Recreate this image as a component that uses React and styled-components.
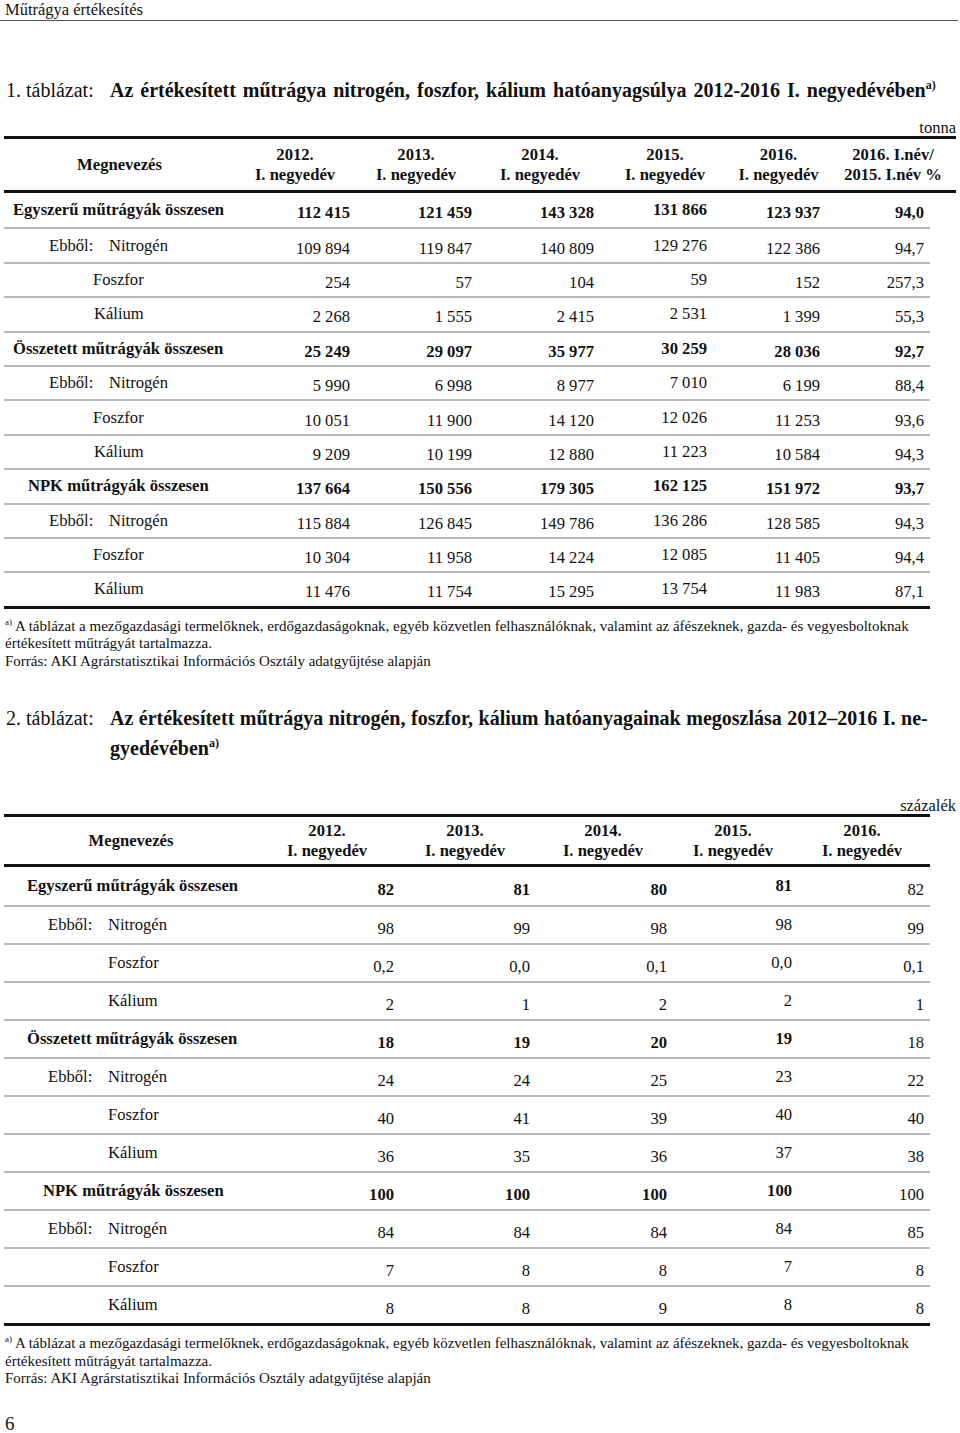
import styled, { createGlobalStyle } from "styled-components";

const GlobalStyle = createGlobalStyle`
  body {
    margin: 0;
    background: #fff;
    color: #111;
    font-family: "Liberation Serif", "Times New Roman", serif;
  }
`;

const table1 = {
  cols: "231px 120px 122px 126px 124px 103px 1fr",
  pads: [5, 5, 9, 20, 10, 6],
  heads: ["2012.|I. negyedév", "2013.|I. negyedév", "2014.|I. negyedév", "2015.|I. negyedév", "2016.|I. negyedév", "2016. I.név/|2015. I.név %"],
  bold: [true, true, true, true, true, true],
  raise: 3,
  rows: [
    { kind: "total", label: "Egyszerű műtrágyák összesen", indent: 9, values: ["112 415", "121 459", "143 328", "131 866", "123 937", "94,0"] },
    { kind: "lead", label: "Nitrogén", indent: 45, values: ["109 894", "119 847", "140 809", "129 276", "122 386", "94,7"] },
    { kind: "sub", label: "Foszfor", indent: 89, values: ["254", "57", "104", "59", "152", "257,3"] },
    { kind: "sub", label: "Kálium", indent: 90, values: ["2 268", "1 555", "2 415", "2 531", "1 399", "55,3"] },
    { kind: "total", label: "Összetett műtrágyák összesen", indent: 9, values: ["25 249", "29 097", "35 977", "30 259", "28 036", "92,7"] },
    { kind: "lead", label: "Nitrogén", indent: 45, values: ["5 990", "6 998", "8 977", "7 010", "6 199", "88,4"] },
    { kind: "sub", label: "Foszfor", indent: 89, values: ["10 051", "11 900", "14 120", "12 026", "11 253", "93,6"] },
    { kind: "sub", label: "Kálium", indent: 90, values: ["9 209", "10 199", "12 880", "11 223", "10 584", "94,3"] },
    { kind: "total", label: "NPK műtrágyák összesen", indent: 24, values: ["137 664", "150 556", "179 305", "162 125", "151 972", "93,7"] },
    { kind: "lead", label: "Nitrogén", indent: 45, values: ["115 884", "126 845", "149 786", "136 286", "128 585", "94,3"] },
    { kind: "sub", label: "Foszfor", indent: 89, values: ["10 304", "11 958", "14 224", "12 085", "11 405", "94,4"] },
    { kind: "sub", label: "Kálium", indent: 90, values: ["11 476", "11 754", "15 295", "13 754", "11 983", "87,1"] },
  ],
};

const table2 = {
  cols: "254px 138px 138px 138px 122px 1fr",
  pads: [2, 4, 5, 2, 6],
  heads: ["2012.|I. negyedév", "2013.|I. negyedév", "2014.|I. negyedév", "2015.|I. negyedév", "2016.|I. negyedév"],
  bold: [true, true, true, true, false],
  raise: 4,
  rows: [
    { kind: "total", label: "Egyszerű műtrágyák összesen", indent: 23, values: ["82", "81", "80", "81", "82"] },
    { kind: "lead", label: "Nitrogén", indent: 44, values: ["98", "99", "98", "98", "99"] },
    { kind: "sub", label: "Foszfor", indent: 104, values: ["0,2", "0,0", "0,1", "0,0", "0,1"] },
    { kind: "sub", label: "Kálium", indent: 104, values: ["2", "1", "2", "2", "1"] },
    { kind: "total", label: "Összetett műtrágyák összesen", indent: 23, values: ["18", "19", "20", "19", "18"] },
    { kind: "lead", label: "Nitrogén", indent: 44, values: ["24", "24", "25", "23", "22"] },
    { kind: "sub", label: "Foszfor", indent: 104, values: ["40", "41", "39", "40", "40"] },
    { kind: "sub", label: "Kálium", indent: 104, values: ["36", "35", "36", "37", "38"] },
    { kind: "total", label: "NPK műtrágyák összesen", indent: 39, values: ["100", "100", "100", "100", "100"] },
    { kind: "lead", label: "Nitrogén", indent: 44, values: ["84", "84", "84", "84", "85"] },
    { kind: "sub", label: "Foszfor", indent: 104, values: ["7", "8", "8", "7", "8"] },
    { kind: "sub", label: "Kálium", indent: 104, values: ["8", "8", "9", "8", "8"] },
  ],
};

function DataTable({ data, width, rowHeight, headHeight }) {
  return (
    <Table $width={width}>
      <HeadRow $cols={data.cols} $height={headHeight}>
        <HeadCell>Megnevezés</HeadCell>
        {data.heads.map((h) => (
          <HeadCell key={h}>
            {h.split("|").map((line) => (
              <span key={line}>{line}</span>
            ))}
          </HeadCell>
        ))}
      </HeadRow>
      <Body>
        {data.rows.map((row, i) => (
          <Row key={i} $cols={data.cols} $height={rowHeight}>
            <Label $indent={row.indent} $bold={row.kind === "total"}>
              {row.kind === "lead" && <Lead>Ebből:</Lead>}
              {row.label}
            </Label>
            {row.values.map((v, j) => (
              <Value
                key={j}
                $pad={data.pads[j]}
                $drop={j === 3 ? 0 : data.raise}
                $bold={row.kind === "total" && data.bold[j]}
              >
                {v}
              </Value>
            ))}
          </Row>
        ))}
      </Body>
    </Table>
  );
}

function Footnote() {
  return (
    <Note>
      <Sup>a)</Sup> A táblázat a mezőgazdasági termelőknek, erdőgazdaságoknak, egyéb közvetlen felhasználóknak, valamint az áfészeknek, gazda- és vegyesboltoknak
      <br />
      értékesített műtrágyát tartalmazza.
      <br />
      Forrás: AKI Agrárstatisztikai Információs Osztály adatgyűjtése alapján
    </Note>
  );
}

export default function App() {
  return (
    <Page>
      <GlobalStyle />
      <RunningHead>Műtrágya értékesítés</RunningHead>

      <Title $top={57} $lh={24} $spacing={2}>
        <span>1. táblázat:</span>
        <strong>
          Az értékesített műtrágya nitrogén, foszfor, kálium hatóanyagsúlya 2012-2016 I. negyedévében
          <Sup>a)</Sup>
        </strong>
      </Title>
      <Unit $top={18}>tonna</Unit>
      <DataTable data={table1} width={952} rowHeight={34.4} headHeight={51} />
      <Footnote />

      <Title $top={33} $lh={30} $spacing={0.5}>
        <span>2. táblázat:</span>
        <strong>
          Az értékesített műtrágya nitrogén, foszfor, kálium hatóanyagainak megoszlása 2012–2016 I. ne-
          <br />
          gyedévében<Sup>a)</Sup>
        </strong>
      </Title>
      <Unit $top={35}>százalék</Unit>
      <DataTable data={table2} width={926} rowHeight={38} headHeight={47} />
      <Footnote />

      <PageNumber>6</PageNumber>
    </Page>
  );
}

const Page = styled.div`
  width: 960px;
`;

const RunningHead = styled.div`
  margin-right: 2px;
  padding-left: 5px;
  font-size: 16.5px;
  line-height: 20px;
  border-bottom: 1px solid #555;
`;

const Title = styled.div`
  display: grid;
  grid-template-columns: 104px 1fr;
  margin: ${(p) => p.$top}px 0 0 6px;
  font-size: 20px;
  line-height: ${(p) => p.$lh}px;

  strong {
    font-weight: 700;
    word-spacing: ${(p) => p.$spacing}px;
  }
`;

const Sup = styled.sup`
  font-size: 0.6em;
  vertical-align: 0.7em;
  line-height: 0;
  font-weight: inherit;
`;

const Unit = styled.div`
  width: 956px;
  margin-top: ${(p) => p.$top}px;
  text-align: right;
  font-size: 16.5px;
  line-height: 16px;
`;

const Table = styled.div`
  width: ${(p) => p.$width}px;
  margin-left: 4px;
  border-top: 3px solid #111;
`;

const HeadRow = styled.div`
  display: grid;
  grid-template-columns: ${(p) => p.$cols};
  height: ${(p) => p.$height}px;
  border-bottom: 3px solid #111;
  font-weight: 700;
  font-size: 16.6px;
  line-height: 20px;
`;

const HeadCell = styled.div`
  display: flex;
  flex-direction: column;
  align-items: center;
  justify-content: center;
  text-align: center;
  white-space: nowrap;
`;

const Body = styled.div`
  width: 926px;
  border-bottom: 3px solid #111;
`;

const Row = styled.div`
  display: grid;
  grid-template-columns: ${(p) => p.$cols};
  box-sizing: border-box;
  height: ${(p) => p.$height}px;
  font-size: 16.6px;
  white-space: nowrap;

  & + & {
    border-top: 2px solid #b8b8b8;
  }
`;

const Label = styled.div`
  display: flex;
  align-items: center;
  padding-left: ${(p) => p.$indent}px;
  font-weight: ${(p) => (p.$bold ? 700 : 400)};
`;

const Lead = styled.span`
  display: inline-block;
  width: 60px;
`;

const Value = styled.div`
  display: flex;
  align-items: center;
  justify-content: flex-end;
  padding-right: ${(p) => p.$pad}px;
  padding-top: ${(p) => p.$drop * 2}px;
  font-weight: ${(p) => (p.$bold ? 700 : 400)};
`;

const Note = styled.p`
  margin: 9px 0 0 5px;
  font-size: 15px;
  line-height: 17.5px;
`;

const PageNumber = styled.div`
  margin: 25px 0 0 5px;
  font-size: 19px;
  line-height: 22px;
`;
